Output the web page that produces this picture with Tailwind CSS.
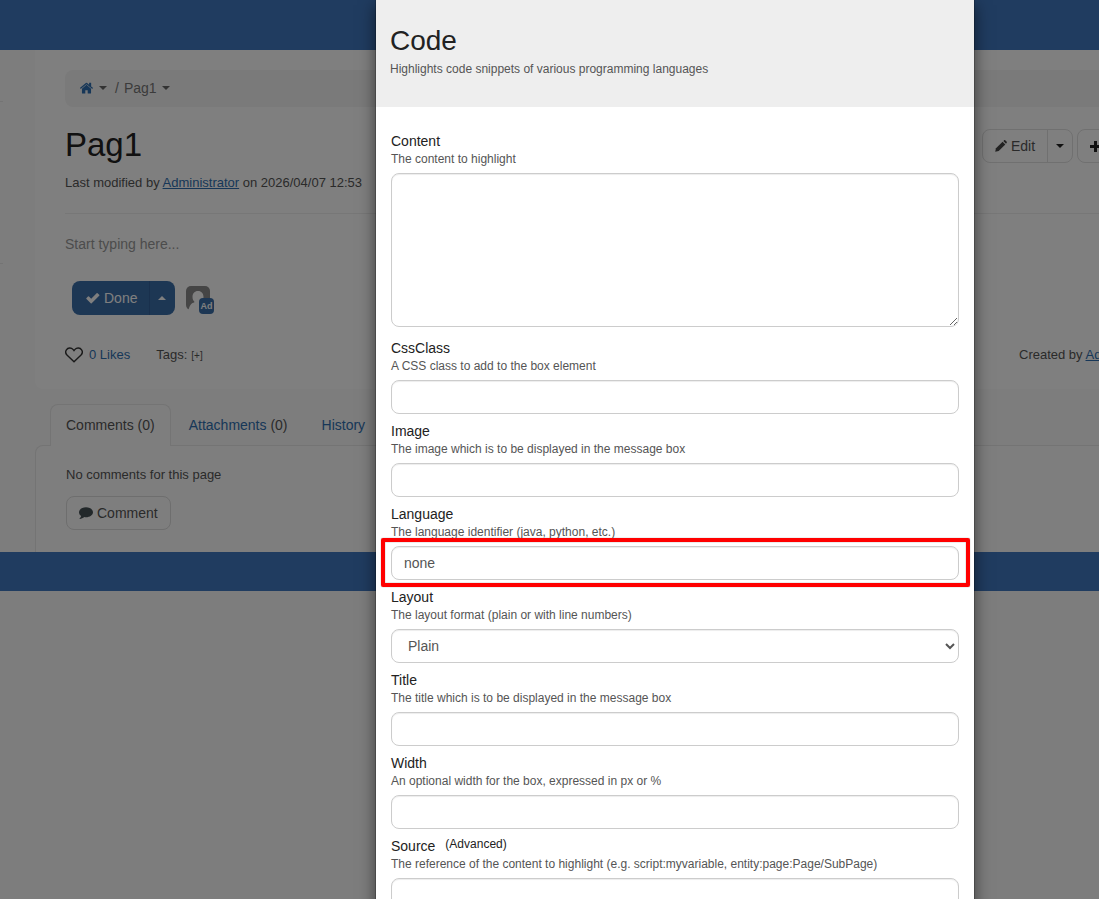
<!DOCTYPE html>
<html lang="en">

<head>
  <meta charset="UTF-8" />
  <meta name="viewport" content="width=device-width, initial-scale=1" />
  <title>Pag1 - Code macro</title>
  <script src="https://cdn.jsdelivr.net/npm/@tailwindcss/browser@4"></script>
</head>

<body class="h-screen overflow-hidden bg-[#fafafa] font-['Liberation_Sans',Arial,sans-serif] text-sm text-[#555]">
  <!-- the page is wider than small windows, the rest is cut off -->
  <div class="relative h-full min-w-[1350px] overflow-hidden">

    <header class="h-[50px] bg-[#4078c0]"></header>

    <div class="flex">
      <aside class="w-[35px] shrink-0 pt-[51px]">
        <div class="w-[3px] border-t border-[#e8e8e8]"></div>
        <div class="mt-[161px] w-[3px] border-t border-[#e8e8e8]"></div>
      </aside>

      <div class="flex-1">
        <main class="mr-[35px] rounded-b-lg bg-white px-[30px] pt-5 pb-6">
          <nav class="flex h-[37px] items-center rounded-lg bg-[#f5f5f5] px-[15px] pb-px text-[#777]">
            <a href="#" aria-label="Home" class="text-[#2f6fb0]">
              <svg class="h-3 w-[13px]" viewBox="0 0 12 11" fill="currentColor">
                <path d="M6 2.6 1.8 6.1v4c0 .3.2.5.5.5h2.6V7.500h2.200v3.100h2.600c.3 0 .5-.2.5-.5v-4z" />
                <path d="M11.900 5.300 10.300 4V1c0-.2-.1-.3-.3-.3H8.700c-.2 0-.3.1-.3.3v1.400L6.600.9a1 1 0 0 0-1.200 0L.1 5.300c-.1.1-.1.3 0 .4l.4.5c.1.1.3.1.4 0L6 2l5.100 4.200c.1.1.3.1.4 0l.4-.5c.1-.1.1-.3 0-.4z" />
              </svg>
            </a>
            <svg class="ml-1.5 h-1 w-2 fill-[#666]" viewBox="0 0 8 4"><path d="M0 0h8L4 4z" /></svg>
            <span class="ml-2">/</span>
            <a href="#" class="ml-[5px]">Pag1</a>
            <svg class="ml-[5px] h-1 w-2 fill-[#666]" viewBox="0 0 8 4"><path d="M0 0h8L4 4z" /></svg>
          </nav>

          <div class="mt-[18px] flex items-start justify-between">
            <h1 class="text-[33px] leading-10 text-[#222]">Pag1</h1>
            <div class="mt-1 flex w-[303px] gap-1 text-[#555]">
              <div class="flex h-[34px] rounded-lg border border-[#e0e0e0]">
                <button class="flex w-[65px] items-center gap-1 border-r border-[#e0e0e0] pl-3">
                  <svg class="h-3 w-3 fill-[#444]" viewBox="0 0 12 12">
                    <path d="M.2 11.800 1 8.300 7.600 1.700l2.700 2.700-6.600 6.600z" />
                    <path d="M8.300 1 9 .4c.4-.4 1-.4 1.400 0l1.200 1.200c.4.400.4 1 0 1.400l-.6.700z" />
                  </svg>
                  <span>Edit</span>
                </button>
                <button aria-label="Edit options" class="flex w-6 items-center justify-center">
                  <svg class="h-1 w-2 fill-[#222]" viewBox="0 0 8 4"><path d="M0 0h8L4 4z" /></svg>
                </button>
              </div>
              <button aria-label="Create" class="flex h-[34px] w-24 items-center rounded-lg border border-[#e0e0e0] pl-3">
                <svg class="h-[11px] w-[11px] fill-[#222]" viewBox="0 0 11 11"><path d="M4 0h3v4h4v3H7v4H4V7H0V4h4z" /></svg>
              </button>
            </div>
          </div>

          <p class="mt-2 text-[13px] leading-5">Last modified by <a href="#" class="text-[#2f6fb0] underline">Administrator</a> on 2026/04/07 12:53</p>
          <hr class="mt-5 border-[#eee]" />
          <p class="mt-5 leading-5 text-[#999]">Start typing here...</p>

          <div class="mt-[27px] ml-[7px] flex items-start">
            <div class="flex h-[34px] overflow-hidden rounded-lg bg-[#3a6ea8] text-white">
              <button class="flex w-[78px] items-center gap-1 border-r border-[#32619a] pl-[14px]">
                <svg class="h-3 w-[14px] fill-white" viewBox="0 0 14 12"><path d="M13.200 2.800 11.600 1.200a.7.7 0 0 0-1 0L5.200 6.700 3 4.400a.7.7 0 0 0-1 0L.5 6a.7.7 0 0 0 0 1l4.200 4.200c.3.3.7.3 1 0l7.500-7.400a.7.7 0 0 0 0-1z" /></svg>
                <span>Done</span>
              </button>
              <button aria-label="More save options" class="flex w-6 items-center justify-center">
                <svg class="h-1 w-2 fill-white" viewBox="0 0 8 4"><path d="M0 4h8L4 0z" /></svg>
              </button>
              <span class="w-px"></span>
            </div>
            <div class="relative mt-[5px] ml-[11px] h-7 w-7">
              <svg class="h-6 w-6" viewBox="0 0 24 24">
                <rect width="24" height="24" rx="5" fill="#8a8a8a" />
                <path d="M12 5c3.400 0 5.500 2.500 5.500 6 0 2-.8 3.600-1.800 4.600v1.200L24 20v4H2.500c1-4 2.500-7 5.800-7.500v-1C7.300 14.500 6.500 13 6.500 11c0-3.500 2.100-6 5.500-6z" fill="#fff" />
              </svg>
              <span class="absolute right-0 bottom-0 flex h-4 w-[15px] items-center justify-center rounded bg-[#3a6ea8] text-[9px] font-bold text-white">Ad</span>
            </div>
          </div>

          <div class="mt-[30px] flex items-center justify-between text-[13px] leading-5">
            <div class="flex items-center">
              <svg class="h-4 w-[18px]" viewBox="0 0 18 16" fill="none" stroke="#333" stroke-width="1.400"><path d="M9 14.800 2.200 8.300C.7 6.800.3 4.500 1.400 2.800 2.900.5 6.200.3 8 2.400l1 1.200 1-1.200c1.800-2.100 5.100-1.900 6.600.4 1.100 1.700.7 4-.8 5.500z" /></svg>
              <a href="#" class="ml-1.5 text-[#2f6fb0]">0 Likes</a>
              <div class="ml-[26px] flex items-center gap-1"><span>Tags:</span><button class="pt-0.5 text-[10px] leading-4">[+]</button></div>
            </div>
            <div class="w-[266px] whitespace-nowrap">Created by <a href="#" class="text-[#2f6fb0] underline">Administrator</a></div>
          </div>
        </main>

        <section class="mt-[15px] mr-[35px]">
          <div role="tablist" class="relative z-10 flex h-[42px] pl-[15px] leading-5 text-[#2f6fb0]">
            <button role="tab" class="rounded-t-lg border border-b-0 border-[#e8e8e8] bg-[#fdfdfd] px-[15px] pb-px text-[#555]">Comments (0)</button>
            <button role="tab" class="px-[18px]">Attachments <span class="text-[#555]">(0)</span></button>
            <button role="tab" class="px-4">History</button>
          </div>
          <div class="-mt-px h-[107px] rounded-tl-lg border border-b-0 border-[#e8e8e8] bg-[#fdfdfd] px-[30px] pt-5">
            <p class="text-[13px] leading-[18px]">No comments for this page</p>
            <button class="mt-3 flex h-[34px] w-[105px] items-center gap-1 rounded-lg border border-[#dcdcdc] pl-3">
              <svg class="h-3 w-[14px] fill-[#455055]" viewBox="0 0 14 12"><path d="M7 .3c3.900 0 7 2.200 7 5s-3.100 5-7 5c-.6 0-1.200-.1-1.700-.2C4 11.300 2.400 11.900.8 12c-.2 0-.3-.2-.2-.4.8-.7 1.400-1.500 1.600-2.500C.8 8.200 0 6.800 0 5.300c0-2.800 3.100-5 7-5z" /></svg>
              <span>Comment</span>
            </button>
          </div>
        </section>
      </div>
    </div>

    <footer class="h-[39px] bg-[#4078c0]"></footer>

    <!-- macro dialog -->
    <div class="absolute inset-0 z-20 overflow-hidden bg-black/50">
      <div role="dialog" aria-labelledby="macroTitle"
        class="mx-auto w-[600px] border-x border-black/20 bg-white bg-clip-padding shadow-[0_5px_15px_rgba(0,0,0,0.5)]">
        <div class="h-[107px] bg-[#eee] px-[14px] pt-[25px]">
          <h2 id="macroTitle" class="text-[28px] leading-8 text-[#222]">Code</h2>
          <p class="mt-1 text-xs leading-[17px]">Highlights code snippets of various programming languages</p>
        </div>

        <form class="px-[15px] pt-6">
          <div class="mb-[11px]">
            <label for="content" class="block leading-5 text-[#222]">Content</label>
            <p class="text-xs leading-[17px]">The content to highlight</p>
            <textarea id="content" class="mt-[5px] block h-[154px] w-full rounded-lg border border-[#ccc] bg-white px-3 py-1.5 inset-shadow-[0_1px_1px_rgba(0,0,0,0.075)]"></textarea>
          </div>
          <div class="mb-[7px]">
            <label for="cssClass" class="block leading-5 text-[#222]">CssClass</label>
            <p class="text-xs leading-[17px]">A CSS class to add to the box element</p>
            <input id="cssClass" type="text" class="mt-[5px] block h-[34px] w-full rounded-lg border border-[#ccc] px-3 inset-shadow-[0_1px_1px_rgba(0,0,0,0.075)]" />
          </div>
          <div class="mb-[7px]">
            <label for="image" class="block leading-5 text-[#222]">Image</label>
            <p class="text-xs leading-[17px]">The image which is to be displayed in the message box</p>
            <input id="image" type="text" class="mt-[5px] block h-[34px] w-full rounded-lg border border-[#ccc] px-3 inset-shadow-[0_1px_1px_rgba(0,0,0,0.075)]" />
          </div>
          <div class="mb-[7px]">
            <label for="language" class="block leading-5 text-[#222]">Language</label>
            <p class="text-xs leading-[17px]">The language identifier (java, python, etc.)</p>
            <div class="relative mt-[5px]">
              <input id="language" type="text" value="none" class="block h-[34px] w-full rounded-lg border border-[#ccc] px-3 inset-shadow-[0_1px_1px_rgba(0,0,0,0.075)]" />
              <!-- highlight around the field -->
              <div class="pointer-events-none absolute -top-2 -right-[11px] -bottom-[7px] -left-[10px] rounded-xs border-4 border-[#f00] shadow-[0_0_1px_#666,inset_0_0_1px_#444]"></div>
            </div>
          </div>
          <div class="mb-[7px]">
            <label for="layout" class="block leading-5 text-[#222]">Layout</label>
            <p class="text-xs leading-[17px]">The layout format (plain or with line numbers)</p>
            <select id="layout" class="mt-[5px] block h-[34px] w-full rounded-lg border border-[#ccc] bg-white pl-3 inset-shadow-[0_1px_1px_rgba(0,0,0,0.075)]">
              <option>Plain</option>
              <option>Line Numbers</option>
            </select>
          </div>
          <div class="mb-[7px]">
            <label for="title" class="block leading-5 text-[#222]">Title</label>
            <p class="text-xs leading-[17px]">The title which is to be displayed in the message box</p>
            <input id="title" type="text" class="mt-[5px] block h-[34px] w-full rounded-lg border border-[#ccc] px-3 inset-shadow-[0_1px_1px_rgba(0,0,0,0.075)]" />
          </div>
          <div class="mb-[7px]">
            <label for="width" class="block leading-5 text-[#222]">Width</label>
            <p class="text-xs leading-[17px]">An optional width for the box, expressed in px or %</p>
            <input id="width" type="text" class="mt-[5px] block h-[34px] w-full rounded-lg border border-[#ccc] px-3 inset-shadow-[0_1px_1px_rgba(0,0,0,0.075)]" />
          </div>
          <div class="mb-[7px]">
            <div class="flex items-start gap-[10px] text-[#222]">
              <label for="source" class="leading-5">Source</label>
              <span class="text-xs leading-4">(Advanced)</span>
            </div>
            <p class="text-xs leading-[17px]">The reference of the content to highlight (e.g. script:myvariable, entity:page:Page/SubPage)</p>
            <input id="source" type="text" class="mt-[5px] block h-[34px] w-full rounded-lg border border-[#ccc] px-3 inset-shadow-[0_1px_1px_rgba(0,0,0,0.075)]" />
          </div>
        </form>
      </div>
    </div>
  </div>
</body>

</html>
